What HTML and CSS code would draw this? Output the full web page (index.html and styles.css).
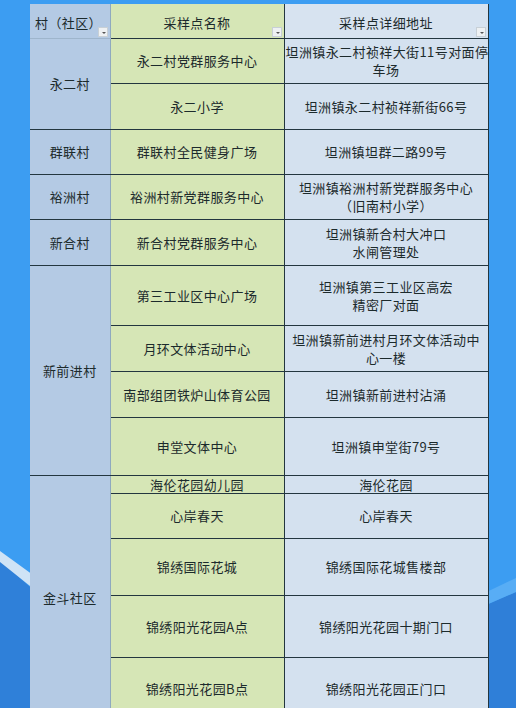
FILE: index.html
```html
<!DOCTYPE html>
<html lang="zh-CN">
<head>
<meta charset="utf-8">
<title>采样点</title>
<link rel="stylesheet" href="styles.css">
</head>
<body>
<svg class="backdrop" width="516" height="708" viewBox="0 0 516 708" aria-hidden="true">
  <rect x="0" y="0" width="516" height="708" fill="#3c9df2"/>
  <path d="M0,560 L40,596 L40,708 L0,708 Z" fill="#2f80d9"/>
  <path d="M0,551 L40,580 L40,594 L0,562 Z" fill="#cfe3f6"/>
  <path d="M470,612 L516,592 L516,708 L470,708 Z" fill="#2f7fd8"/>
  <path d="M470,600 L516,578 L516,592 L470,612 Z" fill="#58adf5"/>
</svg>
<div class="page">
<table class="sites">
  <colgroup><col class="c1"><col class="c2"><col class="c3"></colgroup>
  <thead>
    <tr class="h">
      <th class="v head-left">村（社区）<span class="dd"></span></th>
      <th class="n">采样点名称<span class="dd"></span></th>
      <th class="a">采样点详细地址<span class="dd"></span></th>
    </tr>
  </thead>
  <tbody>
    <tr class="r45"><td class="v" rowspan="2">永二村</td><td class="n">永二村党群服务中心</td><td class="a">坦洲镇永二村祯祥大街11号对面停<br>车场</td></tr>
    <tr class="r46"><td class="n">永二小学</td><td class="a">坦洲镇永二村祯祥新街66号</td></tr>
    <tr class="r45"><td class="v">群联村</td><td class="n">群联村全民健身广场</td><td class="a">坦洲镇坦群二路99号</td></tr>
    <tr class="r45"><td class="v">裕洲村</td><td class="n">裕洲村新党群服务中心</td><td class="a">坦洲镇裕洲村新党群服务中心<br>（旧南村小学）</td></tr>
    <tr class="r46"><td class="v">新合村</td><td class="n">新合村党群服务中心</td><td class="a">坦洲镇新合村大冲口<br>水闸管理处</td></tr>
    <tr class="r60"><td class="v" rowspan="4">新前进村</td><td class="n">第三工业区中心广场</td><td class="a">坦洲镇第三工业区高宏<br>精密厂对面</td></tr>
    <tr class="r46"><td class="n">月环文体活动中心</td><td class="a">坦洲镇新前进村月环文体活动中<br>心一楼</td></tr>
    <tr class="r46"><td class="n">南部组团铁炉山体育公园</td><td class="a">坦洲镇新前进村沾涌</td></tr>
    <tr class="r58"><td class="n">申堂文体中心</td><td class="a">坦洲镇申堂街79号</td></tr>
    <tr class="r18"><td class="v" rowspan="5">金斗社区</td><td class="n">海伦花园幼儿园</td><td class="a">海伦花园</td></tr>
    <tr class="r45"><td class="n">心岸春天</td><td class="a">心岸春天</td></tr>
    <tr class="r57"><td class="n">锦绣国际花城</td><td class="a">锦绣国际花城售楼部</td></tr>
    <tr class="r62"><td class="n">锦绣阳光花园A点</td><td class="a">锦绣阳光花园十期门口</td></tr>
    <tr class="r62"><td class="n">锦绣阳光花园B点</td><td class="a">锦绣阳光花园正门口</td></tr>
  </tbody>
</table>
</div>
</body>
</html>
```

FILE: styles.css
```css
html, body {
  margin: 0;
  padding: 0;
}
body {
  width: 516px;
  height: 708px;
  overflow: hidden;
  position: relative;
  background: #3c9df2;
  font-family: "Noto Sans CJK SC", "Noto Sans", sans-serif;
  color: #1c2a2c;
}
.backdrop {
  position: absolute;
  left: 0;
  top: 0;
  z-index: 0;
}
.page {
  position: relative;
  z-index: 1;
  padding: 4px 0 0 30px;
}
.sites {
  border-collapse: collapse;
  table-layout: fixed;
  width: 458px;
  font-size: 13px;
  letter-spacing: 0.4px;
  line-height: 18px;
}
.c1 { width: 80px; }
.c2 { width: 174px; }
.c3 { width: 204px; }
.sites th, .sites td {
  padding: 0 1px;
  text-align: center;
  vertical-align: middle;
  border: 1.5px solid #23363f;
  font-weight: normal;
  white-space: nowrap;
}
.sites .v {
  background: #b4cae4;
  border-left: none;
  border-right: 1.5px solid #8fa9bf;
}
.sites .n {
  background: #d6e6b6;
}
.sites .a {
  background: #d4e1ef;
  border-right: 1.5px solid #23363f;
}
.sites thead th {
  border-top: none;
  position: relative;
  height: 30px;
  padding-top: 4px;
}
.sites thead th.a { background: #d7e3f0; }
.sites thead th.v {
  border-bottom: 1.5px solid #9eb5cc;
}
.head-left {
  text-align: left !important;
  padding-left: 5px !important;
}
.dd {
  position: absolute;
  right: 2px;
  bottom: 1px;
  width: 10px;
  height: 10px;
  background: #eef1f3;
  border: 1px solid #c8d0d6;
  box-sizing: border-box;
}
.dd::after {
  content: "";
  position: absolute;
  left: 3px;
  top: 4px;
  border-left: 2px solid transparent;
  border-right: 2px solid transparent;
  border-top: 2px solid #555;
}
.r18 { height: 18px; }
.r18 td { line-height: 15px; }
.r45 { height: 45px; }
.r46 { height: 46px; }
.r57 { height: 57px; }
.r58 { height: 58px; }
.r60 { height: 60px; }
.r62 { height: 62px; }
```
